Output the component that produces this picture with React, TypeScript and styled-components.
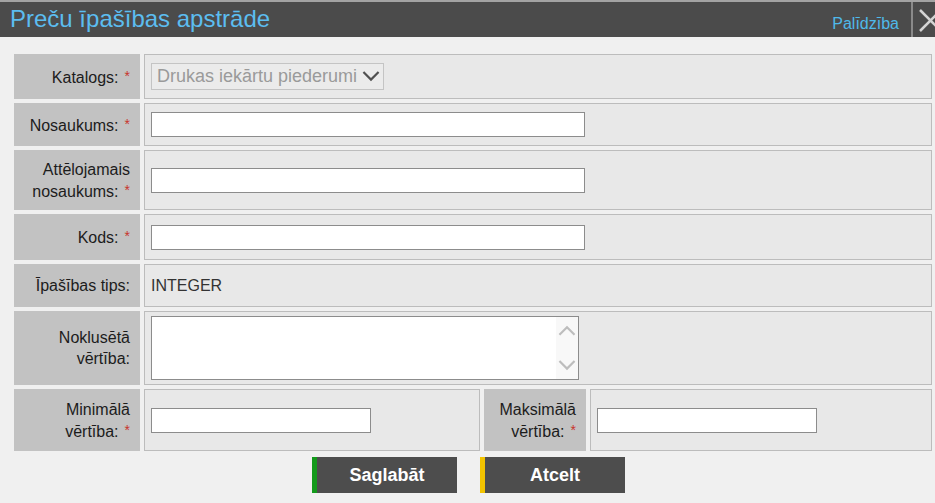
import React from 'react';
import styled, { createGlobalStyle } from 'styled-components';

const GlobalStyle = createGlobalStyle`
  html, body {
    margin: 0;
    padding: 0;
    background: #f0f0f0;
    font-family: "Liberation Sans", Arial, sans-serif;
    overflow: hidden;
  }
`;

const Page = styled.div`
  width: 935px;
  height: 503px;
  background: #f0f0f0;
`;

const Header = styled.header`
  display: flex;
  align-items: stretch;
  height: 35px;
  background: #4b4b4b;
  border-top: 2px solid #a3a3a3;
`;

const Title = styled.h1`
  flex: 1;
  margin: 0;
  padding-left: 10px;
  font-size: 24px;
  font-weight: normal;
  line-height: 34px;
  color: #5cbdf0;
`;

const HelpLink = styled.a`
  align-self: flex-end;
  padding: 0 12px 4px 0;
  font-size: 16px;
  color: #4fb9ea;
  text-decoration: none;
  cursor: pointer;
`;

const CloseButton = styled.button`
  width: 24px;
  padding: 0;
  border: 0;
  border-left: 2px solid #8a8a8a;
  background: transparent;
  overflow: hidden;
  cursor: pointer;

  svg {
    display: block;
  }
`;

const Body = styled.div`
  padding: 17px 3px 0 14px;
`;

const FormGrid = styled.div`
  display: grid;
  grid-template-columns: 126px 336px 102px 1fr;
  grid-template-rows: 45px 43px 60px 46px 43px 74px 62px;
  gap: 4px;
`;

const Label = styled.div`
  display: flex;
  align-items: center;
  justify-content: flex-end;
  padding-right: 10px;
  background: #c2c2c2;
  font-size: 16px;
  line-height: 21px;
  color: #1c1c1c;
  text-align: right;
`;

const Required = styled.span`
  color: #c8342c;
  font-size: 14px;
  vertical-align: 2px;
  margin-left: 6px;
`;

const Cell = styled.div<{ $span?: number }>`
  grid-column: span ${(p) => p.$span ?? 1};
  display: flex;
  align-items: center;
  padding-left: 6px;
  background: #e8e8e8;
  border: 1px solid #bcbcbc;
  font-size: 16px;
  color: #333;
`;

const Select = styled.div`
  display: flex;
  align-items: center;
  gap: 5px;
  height: 27px;
  box-sizing: border-box;
  padding: 0 3px 0 5px;
  border: 1px solid #c4c4c4;
  background: #ebebeb;
  font-size: 18px;
  color: #9a9a9a;
`;

const TextInput = styled.input<{ $width: number }>`
  box-sizing: border-box;
  width: ${(p) => p.$width}px;
  height: 25px;
  border: 1px solid #8c8c8c;
  background: #fff;
  font: inherit;
  outline: none;
`;

const TextareaBox = styled.div`
  display: flex;
  box-sizing: border-box;
  width: 428px;
  height: 64px;
  border: 1px solid #8c8c8c;
  background: #fff;
`;

const Textarea = styled.textarea`
  flex: 1;
  border: 0;
  resize: none;
  outline: none;
  font: inherit;
`;

const ScrollTrack = styled.div`
  display: flex;
  flex-direction: column;
  justify-content: space-between;
  align-items: center;
  width: 22px;
  padding: 8px 0 8px;
  background: #f8f8f8;
`;

const Actions = styled.div`
  display: flex;
  justify-content: center;
  gap: 23px;
  padding-top: 6px;
  padding-right: 9px;
`;

const ActionButton = styled.button<{ $accent: string }>`
  width: 145px;
  height: 36px;
  border: 0;
  border-left: 5px solid ${(p) => p.$accent};
  background: #4d4d4d;
  color: #fff;
  font-family: "Liberation Sans", Arial, sans-serif;
  font-size: 18px;
  font-weight: bold;
  cursor: pointer;
`;

const Chevron = ({
  up,
  color = '#bdbdbd',
  size = 16,
}: {
  up?: boolean;
  color?: string;
  size?: number;
}) => (
  <svg width={size} height={size * 0.6} viewBox="0 0 16 10">
    <polyline
      points={up ? '1,9 8,2 15,9' : '1,1 8,8 15,1'}
      fill="none"
      stroke={color}
      strokeWidth="2"
    />
  </svg>
);

export default function App() {
  return (
    <Page>
      <GlobalStyle />
      <Header>
        <Title>Preču īpašības apstrāde</Title>
        <HelpLink>Palīdzība</HelpLink>
        <CloseButton aria-label="Aizvērt">
          <svg width="24" height="35" viewBox="0 0 24 35">
            <line x1="7" y1="8" x2="28" y2="29" stroke="#d4d4d4" strokeWidth="2.5" />
            <line x1="28" y1="8" x2="7" y2="29" stroke="#d4d4d4" strokeWidth="2.5" />
          </svg>
        </CloseButton>
      </Header>
      <Body>
        <FormGrid>
          <Label>
            <span>Katalogs:<Required>*</Required></span>
          </Label>
          <Cell $span={3}>
            <Select>
              Drukas iekārtu piederumi
              <Chevron color="#505050" size={18} />
            </Select>
          </Cell>

          <Label>
            <span>Nosaukums:<Required>*</Required></span>
          </Label>
          <Cell $span={3}>
            <TextInput $width={434} />
          </Cell>

          <Label>
            <span>Attēlojamais<br />nosaukums:<Required>*</Required></span>
          </Label>
          <Cell $span={3}>
            <TextInput $width={434} />
          </Cell>

          <Label>
            <span>Kods:<Required>*</Required></span>
          </Label>
          <Cell $span={3}>
            <TextInput $width={434} />
          </Cell>

          <Label>
            <span>Īpašības tips:</span>
          </Label>
          <Cell $span={3}>INTEGER</Cell>

          <Label>
            <span>Noklusētā<br />vērtība:</span>
          </Label>
          <Cell $span={3}>
            <TextareaBox>
              <Textarea />
              <ScrollTrack>
                <Chevron up size={18} />
                <Chevron size={18} />
              </ScrollTrack>
            </TextareaBox>
          </Cell>

          <Label>
            <span>Minimālā<br />vērtība:<Required>*</Required></span>
          </Label>
          <Cell>
            <TextInput $width={220} />
          </Cell>
          <Label>
            <span>Maksimālā<br />vērtība:<Required>*</Required></span>
          </Label>
          <Cell>
            <TextInput $width={220} />
          </Cell>
        </FormGrid>
        <Actions>
          <ActionButton $accent="#139a1b">Saglabāt</ActionButton>
          <ActionButton $accent="#f2c300">Atcelt</ActionButton>
        </Actions>
      </Body>
    </Page>
  );
}
